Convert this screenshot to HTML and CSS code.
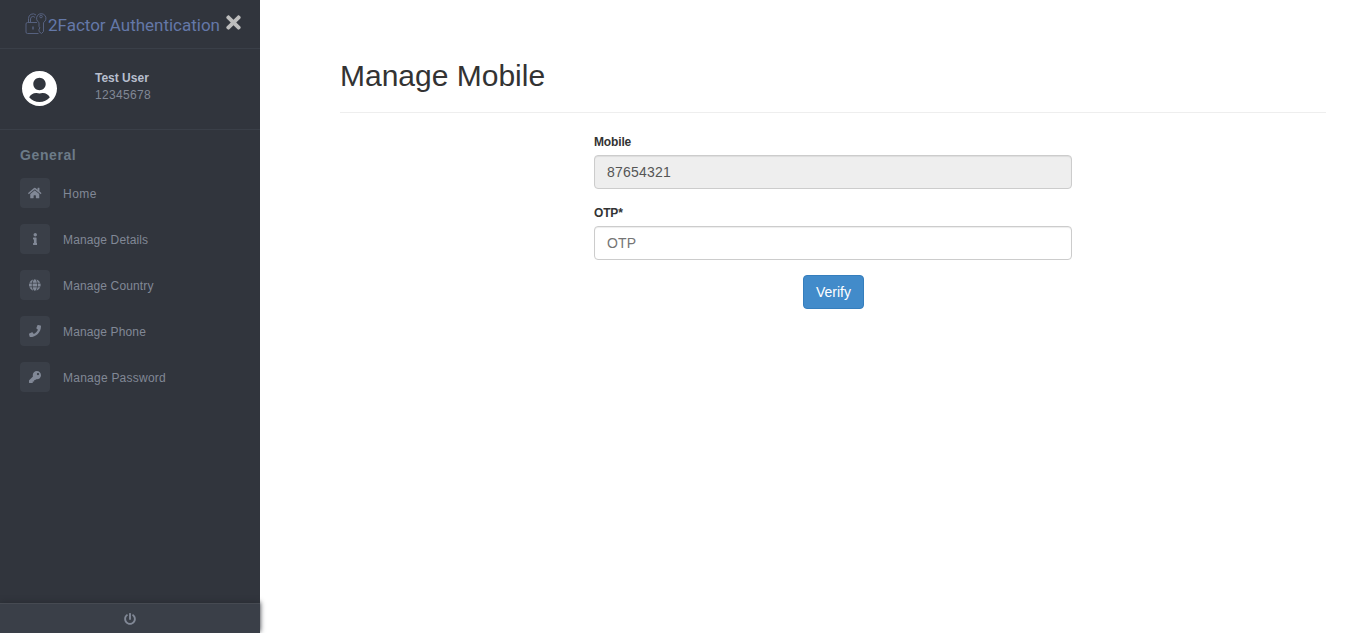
FILE: index.html
```html
<!DOCTYPE html>
<html lang="en">
<head>
<meta charset="utf-8">
<title>Manage Mobile</title>
<link rel="stylesheet" href="styles.css">
</head>
<body>
<div class="page">
  <aside class="sidebar">
    <div class="brand">
      <svg class="logo" width="196" height="24" viewBox="0 0 196 24">
        <g class="logo-mark">
          <path d="M3.500 10.500V6.500a4.500 4.500 0 0 1 7.500-3.500M5.500 10.500V7a2.500 2.500 0 0 1 4.500-1.500"/>
          <path d="M12 10.500H2.500a1.500 1.500 0 0 0-1.500 1.500v8a1.500 1.500 0 0 0 1.500 1.500h11"/>
          <path d="M8 14.500v3" stroke-width="1.500"/>
          <path d="M14 10.500a4.700 4.700 0 1 1 4.500 0v9l-2 2-2.500-2v-2.500l1-1-1-1.500z"/>
          <circle cx="16" cy="4.500" r="1.300"/>
        </g>
        <text class="logo-text" x="23" y="19" textLength="172">2Factor Authentication</text>
      </svg>
      <svg class="close" viewBox="0 0 352 512"><path d="M242.720 256l100.070-100.070c12.280-12.280 12.280-32.190 0-44.480l-22.240-22.240c-12.280-12.280-32.190-12.280-44.480 0L176 189.280 75.930 89.210c-12.280-12.280-32.190-12.280-44.480 0L9.210 111.450c-12.280 12.280-12.280 32.190 0 44.480L109.280 256 9.210 356.070c-12.280 12.280-12.280 32.190 0 44.480l22.240 22.240c12.280 12.280 32.200 12.280 44.480 0L176 322.720l100.070 100.070c12.280 12.280 32.200 12.280 44.480 0l22.240-22.240c12.280-12.280 12.280-32.190 0-44.480L242.720 256z"/></svg>
    </div>
    <div class="profile">
      <svg class="avatar" viewBox="0 8 496 496"><path d="M248 8C111 8 0 119 0 256s111 248 248 248 248-111 248-248S385 8 248 8zm0 96c48.600 0 88 39.400 88 88s-39.400 88-88 88-88-39.400-88-88 39.400-88 88-88zm0 344c-58.700 0-111.300-26.600-146.500-68.200 18.800-35.400 55.600-59.800 98.500-59.800 2.400 0 4.800.4 7.100 1.100 13 4.200 26.600 6.900 40.900 6.900 14.300 0 28-2.700 40.900-6.900 2.300-.7 4.700-1.100 7.100-1.100 42.900 0 79.700 24.400 98.500 59.800C359.300 421.400 306.700 448 248 448z"/></svg>
      <div class="who"><strong class="who-name">Test User</strong><span class="who-id">12345678</span></div>
    </div>
    <nav class="menu">
      <div class="menu-title">General</div>
      <a class="item"><span class="tile"><svg class="ico" viewBox="0 0 576 512"><path d="M280.370 148.260L96 300.110V464a16 16 0 0 0 16 16l112.060-.29a16 16 0 0 0 15.920-16V368a16 16 0 0 1 16-16h64a16 16 0 0 1 16 16v95.640a16 16 0 0 0 16 16.050L464 480a16 16 0 0 0 16-16V300L295.670 148.260a12.190 12.190 0 0 0-15.300 0zM571.600 251.470L488 182.560V44.050a12 12 0 0 0-12-12h-56a12 12 0 0 0-12 12v72.610L318.470 43a48 48 0 0 0-61 0L4.340 251.470a12 12 0 0 0-1.600 16.900l25.500 31A12 12 0 0 0 45.150 301l235.220-193.740a12.190 12.190 0 0 1 15.300 0L530.900 301a12 12 0 0 0 16.900-1.600l25.500-31a12 12 0 0 0-1.700-16.930z"/></svg></span><span class="item-text wide">Home</span></a>
      <a class="item"><span class="tile"><svg class="ico" viewBox="0 0 192 512"><path d="M20 424.229h20V279.771H20c-11.046 0-20-8.954-20-20V212c0-11.046 8.954-20 20-20h112c11.046 0 20 8.954 20 20v212.229h20c11.046 0 20 8.954 20 20V492c0 11.046-8.954 20-20 20H20c-11.046 0-20-8.954-20-20v-47.771c0-11.046 8.954-20 20-20zM96 0C56.235 0 24 32.235 24 72s32.235 72 72 72 72-32.235 72-72S135.764 0 96 0z"/></svg></span><span class="item-text">Manage Details</span></a>
      <a class="item"><span class="tile"><svg class="ico" viewBox="0 0 496 512"><path d="M336.500 160C322 70.700 287.800 8 248 8s-74 62.700-88.500 152h177zM152 256c0 22.200 1.200 43.500 3.300 64h185.300c2.100-20.500 3.300-41.800 3.300-64s-1.200-43.500-3.300-64H155.300c-2.100 20.500-3.300 41.800-3.300 64zm324.700-96c-28.600-67.900-86.500-120.400-158-141.600 24.400 33.800 41.200 84.700 50 141.600h108zM177.200 18.400C105.800 39.600 47.800 92.100 19.300 160h108c8.700-56.900 25.500-107.800 49.900-141.600zM487.400 192H372.700c2.100 21 3.300 42.500 3.300 64s-1.200 43-3.300 64h114.600c5.500-20.500 8.600-41.800 8.600-64s-3.100-43.500-8.500-64zM120 256c0-21.500 1.200-43 3.300-64H8.600C3.200 212.500 0 233.800 0 256s3.200 43.500 8.600 64h114.600c-2-21-3.200-42.500-3.200-64zm39.500 96c14.500 89.300 48.700 152 88.500 152s74-62.700 88.500-152h-177zm159.300 141.600c71.400-21.200 129.400-73.700 158-141.600h-108c-8.800 56.900-25.600 107.800-50 141.600zM19.300 352c28.600 67.900 86.500 120.400 158 141.600-24.400-33.800-41.200-84.700-50-141.600h-108z"/></svg></span><span class="item-text">Manage Country</span></a>
      <a class="item"><span class="tile"><svg class="ico" viewBox="0 0 512 512"><path d="M493.400 24.600l-104-24c-11.300-2.600-22.900 3.300-27.500 13.900l-48 112c-4.200 9.800-1.400 21.300 6.900 28l60.600 49.600c-36 76.700-98.900 140.500-177.200 177.200l-49.600-60.600c-6.800-8.300-18.200-11.100-28-6.900l-112 48C3.900 366.500-2 378.100.6 389.400l24 104C27.100 504.200 36.700 512 48 512c256.100 0 464-207.500 464-464 0-11.200-7.700-20.900-18.600-23.400z"/></svg></span><span class="item-text">Manage Phone</span></a>
      <a class="item"><span class="tile"><svg class="ico" viewBox="0 0 512 512"><path d="M512 176.001C512 273.203 433.202 352 336 352c-11.220 0-22.190-1.062-32.827-3.069l-24.012 27.014A23.999 23.999 0 0 1 261.223 384H224v40c0 13.255-10.745 24-24 24h-40v40c0 13.255-10.745 24-24 24H24c-13.255 0-24-10.745-24-24v-78.059c0-6.365 2.529-12.470 7.029-16.971l161.802-161.802C163.108 213.814 160 195.271 160 176 160 78.798 238.797.001 335.999 0 433.488-.001 512 78.511 512 176.001zM336 128c0 26.510 21.490 48 48 48s48-21.490 48-48-21.490-48-48-48-48 21.490-48 48z"/></svg></span><span class="item-text medium">Manage Password</span></a>
    </nav>
    <div class="footer"><svg class="ico" viewBox="0 0 512 512"><path d="M400 54.100c63 45 104 118.600 104 201.900 0 136.800-110.800 247.700-247.500 248C120 504.300 8.200 393 8 256.400 7.900 173.100 48.900 99.300 111.800 54.200c11.700-8.300 28-4.800 35 7.700L162.600 90c5.900 10.500 3.100 23.800-6.600 31-41.500 30.800-68 79.600-68 134.900-.1 92.300 74.500 168.100 168 168.100 91.600 0 168.600-74.200 168-169.100-.3-51.800-24.700-101.800-68.100-134-9.700-7.200-12.400-20.500-6.500-30.900l15.800-28.100c7-12.400 23.200-16.100 34.800-7.800zM296 264V24c0-13.300-10.700-24-24-24h-32c-13.300 0-24 10.700-24 24v240c0 13.300 10.700 24 24 24h32c13.300 0 24-10.700 24-24z"/></svg></div>
  </aside>
  <main class="content">
    <h2 class="heading">Manage Mobile</h2>
    <form class="form">
      <label class="label" for="mobile">Mobile</label>
      <input class="field" id="mobile" type="text" value="87654321" disabled>
      <label class="label" for="otp">OTP*</label>
      <input class="field" id="otp" type="text" placeholder="OTP">
      <button class="verify" type="button">Verify</button>
    </form>
  </main>
</div>
</body>
</html>
```
FILE: styles.css
```css
* { box-sizing: border-box; }
body { margin: 0; background: #fff; color: #333; font: 12px/17px "Liberation Sans", Arial, sans-serif; }
.page { display: flex; height: 633px; overflow: hidden; }
.sidebar { display: flex; flex-direction: column; flex: none; width: 260px; background: #31353d; color: #818896; }
.brand { display: flex; align-items: flex-start; height: 49px; padding: 12px 19px 0 25px; border-bottom: 1px solid #3a3f48; }
.logo { flex: none; }
.logo-mark { fill: none; stroke: #56617f; stroke-width: 1; }
.logo-text { fill: #6478a8; font: 17px Roboto, sans-serif; }
.close { flex: none; width: 15px; height: 21px; margin-left: 5px; fill: #bdbdbd; }
.profile { display: flex; height: 81px; padding: 20px 22px; border-bottom: 1px solid #3a3f48; }
.avatar { width: 35px; height: 35px; margin-top: 2px; fill: #fff; }
.who { display: flex; flex-direction: column; margin-left: 38px; padding-top: 1px; }
.who-name { color: #b8bfce; }
.who-id { letter-spacing: .32px; }
.menu { display: flex; flex: 1; flex-direction: column; gap: 16px; padding: 15px 20px 0; }
.menu-title { height: 17px; font-size: 14px; line-height: 20px; font-weight: bold; letter-spacing: .6px; color: #6c7b88; }
.item { display: flex; align-items: center; gap: 13px; height: 30px; }
.item-text { padding-top: 2px; letter-spacing: .13px; }
.item-text.medium { letter-spacing: .24px; }
.item-text.wide { letter-spacing: .5px; }
.tile { display: flex; align-items: center; justify-content: center; width: 30px; height: 30px; border-radius: 4px; background: #3a3f48; }
.ico { display: block; height: 12px; fill: #818896; }
.footer { display: flex; align-items: center; justify-content: center; height: 30px; border-top: 1px solid #464a52; background: #3a3f48; box-shadow: 0 -1px 5px #282c33; }
.content { flex: 1; padding: 59px 24px 0 80px; }
.heading { margin: 0 0 20px; padding-bottom: 20px; border-bottom: 1px solid #eee; font-size: 30px; line-height: 33px; font-weight: 500; }
.form { display: flex; flex-direction: column; width: 478px; margin: 0 auto; }
.label { padding-top: 1px; margin-bottom: 4px; font-weight: bold; letter-spacing: -.15px; }
.field { width: 100%; height: 34px; margin: 0 0 15px; padding: 6px 12px; border: 1px solid #ccc; border-radius: 4px; background: #fff; color: #555; font: 14px/20px "Liberation Sans", Arial, sans-serif; letter-spacing: .2px; box-shadow: inset 0 1px 1px rgba(0,0,0,.075); }
.field:disabled { background: #eee; }
.field::placeholder { color: #757575; }
.verify { align-self: center; width: 61px; height: 34px; margin-left: 1px; padding: 6px 0; border: 1px solid #357ebd; border-radius: 4px; background: #428bca; color: #fff; font: 14px/20px "Liberation Sans", Arial, sans-serif; }
```
